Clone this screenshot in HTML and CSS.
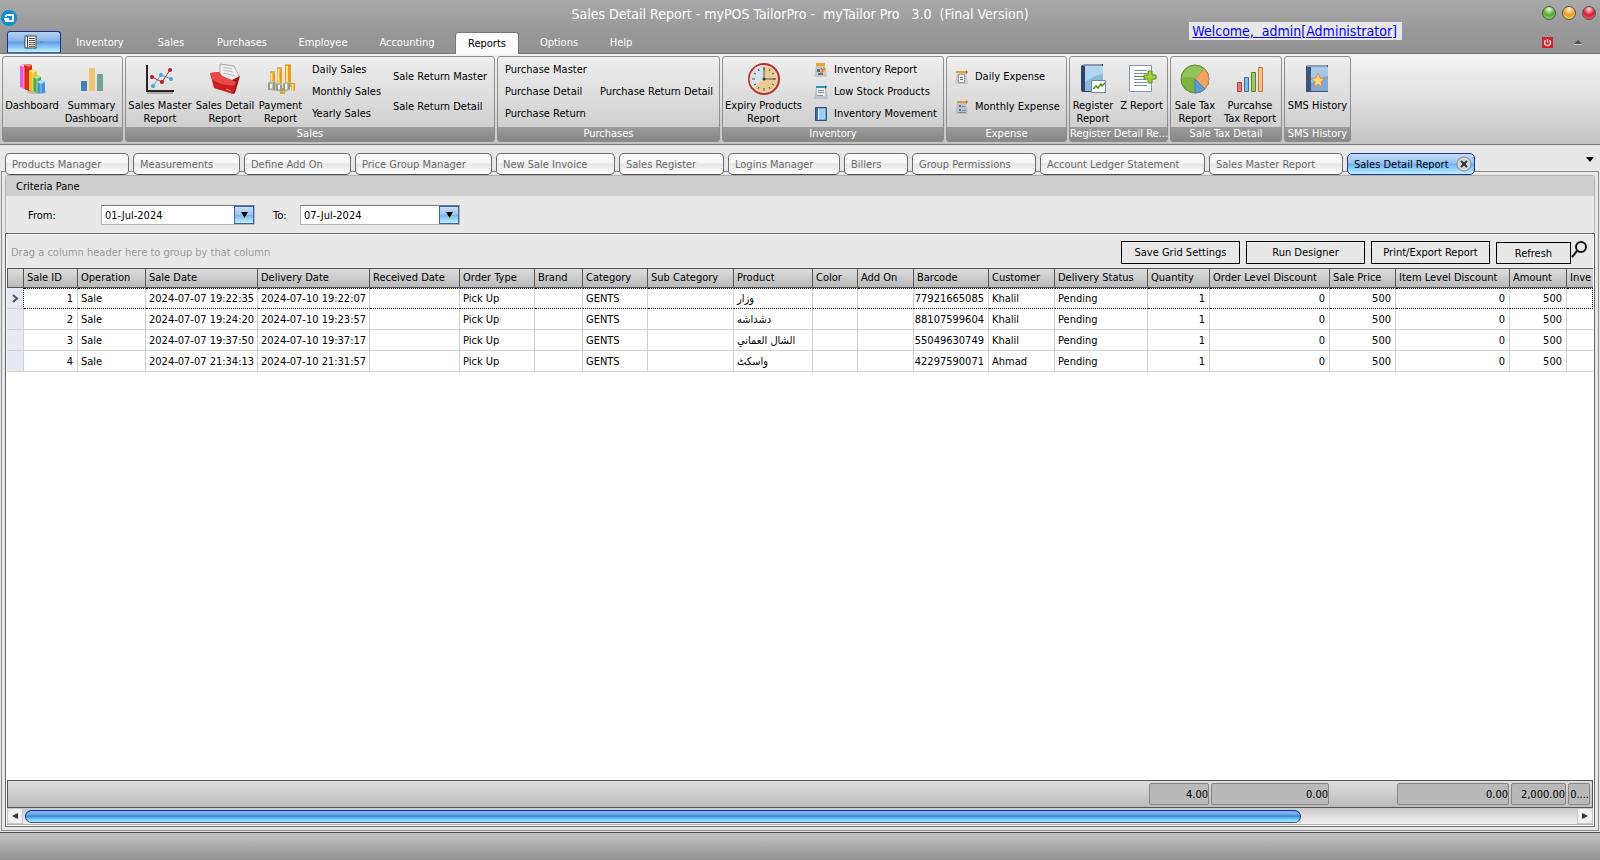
FILE: index.html
```html
<!DOCTYPE html>
<html lang="en">
<head>
    <meta charset="UTF-8">
    <meta name="viewport" content="width=device-width, initial-scale=1.0">
    <title>Sales Detail Report - myPOS TailorPro</title>
    <link rel="stylesheet" href="styles.css">
</head>
<body>
    <header class="titlebar">
        <svg class="logo" width="16" height="16" viewBox="0 0 16 16">
            <circle cx="8" cy="8" r="8" fill="#0a8fd8"/>
            <path d="M5 5h7v6H4M5 5v2M3 9h5" fill="none" stroke="#fff" stroke-width="2"/>
        </svg>
        <h1>Sales Detail Report - myPOS TailorPro -&nbsp; myTailor Pro&nbsp;&nbsp; 3.0&nbsp; (Final Version)</h1>
        <div class="window-buttons">
            <button type="button" class="ball green" aria-label="Minimize"></button>
            <button type="button" class="ball amber" aria-label="Restore"></button>
            <button type="button" class="ball red" aria-label="Close"></button>
        </div>
        <a class="welcome" href="#">Welcome,&nbsp; admin[Administrator]</a>
    </header>

    <nav class="menu">
        <button type="button" class="app-button" aria-label="Application menu">
            <svg width="22" height="14" viewBox="0 0 22 14">
                <rect x="2" y="1" width="11" height="12" fill="#fff" stroke="#444"/>
                <path d="M4.500 1v12" stroke="#444"/>
                <path d="M6 3.500h6M6 5.500h6M6 7.500h6M6 9.500h6M6 11.500h6" stroke="#555"/>
                <path d="M15 6h6l-3 3z" fill="#7a8ea8"/>
            </svg>
        </button>
        <a href="#">Inventory</a>
        <a href="#">Sales</a>
        <a href="#">Purchases</a>
        <a href="#">Employee</a>
        <a href="#">Accounting</a>
        <a href="#" class="current">Reports</a>
        <a href="#">Options</a>
        <a href="#">Help</a>
        <div class="menu-right">
            <button type="button" class="power" aria-label="Log off">
                <svg width="11" height="11" viewBox="0 0 11 11">
                    <path d="M3.600 3.300a3 3 0 1 0 3.800 0M5.500 2v3.500" fill="none" stroke="#fff" stroke-width="1.300"/>
                </svg>
            </button>
            <button type="button" class="collapse" aria-label="Collapse ribbon">
                <svg width="8" height="5" viewBox="0 0 8 5"><path d="M0 4l4-4 4 4z" fill="#555"/><path d="M0 4.500h8" stroke="#ccc"/></svg>
            </button>
        </div>
    </nav>

    <section class="ribbon">
        <div class="group g-dash">
            <div class="items">
                <button type="button" class="big">
                    <svg width="32" height="32" viewBox="0 0 32 32">
                        <ellipse cx="21" cy="29" rx="10" ry="2" fill="#bbb"/>
                        <path d="M4 3l3-2 4 1v23l-3 1-4-2z" fill="#e05be8"/><path d="M4 3l3-2 4 1-3 2z" fill="#f6b4fa"/>
                        <path d="M8 2l4-1 4 1v25l-3 1-5-2z" fill="#d92a18"/><path d="M8 2l4-1 4 1-3 2z" fill="#f58a76"/>
                        <path d="M13 8l4-2 4 2v20l-4 1-4-2z" fill="#f2c11b"/><path d="M13 8l4-2 4 2-4 2z" fill="#fbe88c"/>
                        <path d="M17 14l4-2 4 2v14l-4 2-4-2z" fill="#4fae38"/><path d="M17 14l4-2 4 2-4 2z" fill="#b5e59b"/>
                        <path d="M21 19l4-2 4 2v10l-4 2-4-2z" fill="#3f93d8"/><path d="M21 19l4-2 4 2-4 2z" fill="#b3dcf8"/>
                        <path d="M8 4v22M17 10v18M21 16v13M25 21v10" stroke="#fff" stroke-opacity=".5"/>
                    </svg>
                    <span>Dashboard</span>
                </button>
                <button type="button" class="big">
                    <svg width="32" height="32" viewBox="0 0 32 32">
                        <path d="M5 18h6v10H5z" fill="#4a80b8"/><path d="M13 5h6v23h-6z" fill="#efc473"/><path d="M21 11h6v17h-6z" fill="#74a493"/>
                    </svg>
                    <span>Summary<br>Dashboard</span>
                </button>
            </div>
        </div>
        <div class="group g-sales">
            <div class="items">
                <button type="button" class="big">
                    <svg width="32" height="32" viewBox="0 0 32 32">
                        <path d="M3 30h26" stroke="#aaa" stroke-width="2"/>
                        <path d="M3 2v26h27" fill="none" stroke="#2b2326" stroke-width="2"/>
                        <path d="M9 23l8-11 10 4" fill="none" stroke="#55aacb"/><path d="M8 14l10 5 8-12" fill="none" stroke="#b3303c"/>
                        <g fill="#45a5cf"><circle cx="9" cy="23" r="2"/><circle cx="17" cy="12" r="2"/><circle cx="27" cy="16" r="2"/></g>
                        <g fill="#b01826"><circle cx="8" cy="14" r="2"/><circle cx="18" cy="19" r="2"/><circle cx="26" cy="7" r="2"/></g>
                    </svg>
                    <span>Sales Master<br>Report</span>
                </button>
                <button type="button" class="big">
                    <svg width="32" height="32" viewBox="0 0 32 32">
                        <path d="M11 1l14 2 5 10-5 14-14-8z" fill="#efefef" stroke="#aaa"/>
                        <path d="M14 4l9 2M14 7l10 2M15 10l11 3" stroke="#bbb"/>
                        <path d="M31 13l-5 17-2 1-1-14z" fill="#a30f14"/>
                        <path d="M1 10l9-1 3 4 14 6-3 12-19-6z" fill="#cc1e22"/>
                        <path d="M1 10l9-1 3 4 14 6-1 3C16 23 8 20 3 16z" fill="#e84a48"/>
                        <path d="M17 26l5 2" stroke="#ef8a86"/>
                    </svg>
                    <span>Sales Detail<br>Report</span>
                </button>
                <button type="button" class="big">
                    <svg width="32" height="32" viewBox="0 0 32 32">
                        <path d="M5 10h5v12H5zM12 6h5v16h-5zM20 2h6v22h-6zM26 20h4v8h-4zM15 25h5v6h-5z" fill="#e99b1b"/>
                        <path d="M6.500 10v10M13.500 6v14M22 2v18M27.500 21v7" stroke="#ffe08a" stroke-width="2"/>
                        <path d="M5 9h5M12 5h5M20 2h6" stroke="#c87908"/>
                        <path d="M3 19l7-1v10l-7-1zM10 19l7 2v9l-7-3zM18 20l7-2v9l-7 3z" fill="#b9bda8"/>
                        <path d="M4 20v7M9 19v8M12 21v7M16 22v6M19 21v7M24 20v6" stroke="#747b67"/>
                        <path d="M6 21v4M14 22v4M21 21v5" stroke="#f3f5ea" stroke-width="2"/>
                    </svg>
                    <span>Payment<br>Report</span>
                </button>
                <div class="stack">
                    <button type="button">Daily Sales</button>
                    <button type="button">Monthly Sales</button>
                    <button type="button">Yearly Sales</button>
                </div>
                <div class="stack two">
                    <button type="button">Sale Return Master</button>
                    <button type="button">Sale Return Detail</button>
                </div>
            </div>
            <h2>Sales</h2>
        </div>
        <div class="group g-purchases">
            <div class="items">
                <div class="stack">
                    <button type="button">Purchase Master</button>
                    <button type="button">Purchase Detail</button>
                    <button type="button">Purchase Return</button>
                </div>
                <div class="stack one">
                    <button type="button">Purchase Return Detail</button>
                </div>
            </div>
            <h2>Purchases</h2>
        </div>
        <div class="group g-inventory">
            <div class="items">
                <button type="button" class="big">
                    <svg width="32" height="32" viewBox="0 0 32 32">
                        <circle cx="16" cy="16" r="15" fill="#eacb92" stroke="#bb2f2f" stroke-width="2"/>
                        <path d="M16 16V2A14 14 0 0 0 5 25z" fill="#d5e2ea"/>
                        <circle cx="16" cy="16" r="13" fill="none" stroke="#f3d9c8"/>
                        <path d="M16 4v3M16 25v3M4 16h3M25 16h3M22 6l-1 2M26 10l-2 1M26 22l-2-1M22 26l-1-2M10 26l1-2M6 22l2-1M6 10l2 1M10 6l1 2" stroke="#555"/>
                        <path d="M16 5v11h11" fill="none" stroke="#555"/><circle cx="16" cy="16" r="1.500" fill="#333"/>
                    </svg>
                    <span>Expiry Products<br>Report</span>
                </button>
                <div class="stack icons">
                    <button type="button">
                        <svg width="16" height="16" viewBox="0 0 16 16">
                            <path d="M3 3h9l2 12H1z" fill="#c6c8ce"/><path d="M3 1h9v3H3z" fill="#f0a42a"/>
                            <path d="M4 7h3v3H4zM5 11h5v2H5z" fill="#5f6b82"/><path d="M7 11l4-6 2 2-4 5z" fill="#e8932a"/><path d="M8 6l2 3" stroke="#d6452f"/>
                        </svg>Inventory Report</button>
                    <button type="button">
                        <svg width="16" height="16" viewBox="0 0 16 16">
                            <path d="M3 3h10l2 12H1z" fill="#bfc4c8"/><path d="M4 4h8v8H4z" fill="#e9edf0"/><path d="M3 2h10v2H3z" fill="#3591b3"/><path d="M12 1l2 2-2 2z" fill="#235f78"/>
                            <path d="M5 6.500h6M5 8.500h6M4 11.500h6" stroke="#8895a0"/>
                        </svg>Low Stock Products</button>
                    <button type="button">
                        <svg width="16" height="16" viewBox="0 0 16 16">
                            <path d="M2.500 1.500h11v13h-11z" fill="#6fb0e6" stroke="#2a5078"/><path d="M3 2h2v12H3z" fill="#3d6fa8"/><path d="M6.500 3.500h5v9h-5z" fill="#9dcbf1" stroke="#a9d3f4"/><path d="M5.500 2v12" stroke="#e5f2fc"/>
                        </svg>Inventory Movement</button>
                </div>
            </div>
            <h2>Inventory</h2>
        </div>
        <div class="group g-expense">
            <div class="items">
                <div class="stack two icons">
                    <button type="button">
                        <svg width="16" height="16" viewBox="0 0 16 16">
                            <path d="M3 3h9l2 12H1z" fill="#c8c8ca"/><path d="M2 2h11v2H2z" fill="#e9973a"/><path d="M12 1l2 2-2 2z" fill="#c56e18"/>
                            <path d="M4.500 5.500h6v8h-6z" fill="#f5f5f5" stroke="#9b9ea4"/><path d="M6 8.500h3M6 10.500h3" stroke="#686d78"/>
                        </svg>Daily Expense</button>
                    <button type="button">
                        <svg width="16" height="16" viewBox="0 0 16 16">
                            <path d="M3 3h9l2 12H1z" fill="#bcc1c7"/><path d="M3 2h10v2H3z" fill="#e9973a"/><path d="M12 1l2 2-2 2z" fill="#c56e18"/>
                            <path d="M5 6h2v2H5zM5 10h2v2H5z" fill="#3d7fb0"/><path d="M8 7.500h3M8 11.500h4M4 13.500h8" stroke="#7e8792"/>
                        </svg>Monthly Expense</button>
                </div>
            </div>
            <h2>Expense</h2>
        </div>
        <div class="group g-register">
            <div class="items">
                <button type="button" class="big">
                    <svg width="32" height="32" viewBox="0 0 32 32">
                        <path d="M4 3l3-2h19v28H5l-1-2z" fill="#2d4468"/><path d="M8 3h18v25H8z" fill="#8abbdc"/><path d="M8 3h18v8q-9 1-18 8z" fill="#b0d6ed"/><path d="M6 2h19" stroke="#e1e8f1"/>
                        <path d="M14.500 17.500h14v12h-14z" fill="#fff" stroke="#7085a8"/>
                        <path d="M16 26l3-3 2 2 3-4 1 2 3-3" fill="none" stroke="#4a9416" stroke-width="1.500"/>
                    </svg>
                    <span>Register<br>Report</span>
                </button>
                <button type="button" class="big">
                    <svg width="32" height="32" viewBox="0 0 32 32">
                        <path d="M3.500 2.500h22v26h-22z" fill="#fbfcff" stroke="#7f94bd"/>
                        <path d="M8 7.500h13M8 10.500h13M8 16.500h12M8 19.500h13M8 22.500h13" stroke="#8090b0"/><path d="M8 13.500h12" stroke="#449418"/>
                        <path d="M22 8h4v4h4v4h-4v4h-4v-4h-4v-4h4z" fill="#a6cf38" stroke="#4f901c"/>
                    </svg>
                    <span>Z Report</span>
                </button>
            </div>
            <h2>Register Detail Re...</h2>
        </div>
        <div class="group g-tax">
            <div class="items">
                <button type="button" class="big">
                    <svg width="32" height="32" viewBox="0 0 32 32">
                        <circle cx="16" cy="16" r="14" fill="#7cb342" stroke="#5a8730"/>
                        <path d="M16 16L25 6a14 14 0 0 1 1 20z" fill="#f2a361" stroke="#d58a50"/><path d="M16 16l10 10a14 14 0 0 1-10 4z" fill="#5d9ed6" stroke="#467fb2"/>
                        <path d="M3 15A13 13 0 0 1 24 6l-8 9q-7-2-13 0z" fill="#a3ce6c" fill-opacity=".6"/>
                    </svg>
                    <span>Sale Tax<br>Report</span>
                </button>
                <button type="button" class="big">
                    <svg width="32" height="32" viewBox="0 0 32 32">
                        <path d="M3.500 19.500h4v9h-4z" fill="#e58080" stroke="#b53838"/><path d="M10.500 14.500h4v14h-4z" fill="#85b8e6" stroke="#3870a8"/>
                        <path d="M17.500 9.500h4v19h-4z" fill="#9cc95a" stroke="#568720"/><path d="M24.500 4.500h4v24h-4z" fill="#f7c088" stroke="#c27a38"/>
                    </svg>
                    <span>Purcahse<br>Tax Report</span>
                </button>
            </div>
            <h2>Sale Tax Detail</h2>
        </div>
        <div class="group g-sms">
            <div class="items">
                <button type="button" class="big">
                    <svg width="32" height="32" viewBox="0 0 32 32">
                        <path d="M4 3l2-1h20v27H4z" fill="#3d5579"/><path d="M9 4h17v24H9z" fill="#7fa9d5"/><path d="M9 4h17v9q-9 1-17 7z" fill="#a9c7e6"/><path d="M5 3h20" stroke="#e0e7f0"/>
                        <path d="M16 10l2 5 5 .500-4 3.500 1 5-4-3-4 3 1-5-4-3.500 5-.500z" fill="#fcd28a" stroke="#dd8f3d"/>
                    </svg>
                    <span>SMS History</span>
                </button>
            </div>
            <h2>SMS History</h2>
        </div>
    </section>

    <main class="workspace">
        <div class="tabs">
            <button type="button">Products Manager</button>
            <button type="button">Measurements</button>
            <button type="button">Define Add On</button>
            <button type="button">Price Group Manager</button>
            <button type="button">New Sale Invoice</button>
            <button type="button">Sales Register</button>
            <button type="button">Logins Manager</button>
            <button type="button">Billers</button>
            <button type="button">Group Permissions</button>
            <button type="button">Account Ledger Statement</button>
            <button type="button">Sales Master Report</button>
            <button type="button" class="active">Sales Detail Report
                <svg width="16" height="16" viewBox="0 0 16 16"><circle cx="8" cy="8" r="7" fill="#d6d6d6" stroke="#8c8c8c"/><path d="M5 5l6 6M11 5l-6 6" stroke="#333" stroke-width="2"/></svg>
            </button>
            <svg class="more" width="8" height="5" viewBox="0 0 8 5"><path d="M0 0h8L4 5z" fill="#000"/></svg>
        </div>

        <div class="page">
            <form class="criteria">
                <h3>Criteria Pane</h3>
                <div class="fields">
                    <label class="from" for="fromDate">From:</label>
                    <div class="date">
                        <input type="text" id="fromDate" value="01-Jul-2024">
                        <button type="button" aria-label="Open calendar"><svg width="7" height="6" viewBox="0 0 7 6"><path d="M0 0h7L3.500 6z"/></svg></button>
                    </div>
                    <label class="to" for="toDate">To:</label>
                    <div class="date wide">
                        <input type="text" id="toDate" value="07-Jul-2024">
                        <button type="button" aria-label="Open calendar"><svg width="7" height="6" viewBox="0 0 7 6"><path d="M0 0h7L3.500 6z"/></svg></button>
                    </div>
                </div>
            </form>

            <div class="grid">
                <div class="group-panel">
                    <p>Drag a column header here to group by that column</p>
                    <button type="button">Save Grid Settings</button>
                    <button type="button">Run Designer</button>
                    <button type="button">Print/Export Report</button>
                    <button type="button" class="refresh">Refresh</button>
                    <svg class="search" width="16" height="17" viewBox="0 0 16 17"><circle cx="10" cy="6" r="5" fill="none" stroke="#111" stroke-width="2"/><path d="M6 10l-5 6" stroke="#111" stroke-width="2"/></svg>
                </div>

                <table class="data">
                    <colgroup>
                        <col class="c-mark"><col class="c-id"><col class="c-op"><col class="c-date"><col class="c-date"><col class="c-recv"><col class="c-type"><col class="c-brand"><col class="c-cat"><col class="c-sub"><col class="c-prod"><col class="c-color"><col class="c-addon"><col class="c-bar"><col class="c-cust"><col class="c-status"><col class="c-qty"><col class="c-old"><col class="c-price"><col class="c-ild"><col class="c-amt"><col>
                    </colgroup>
                    <thead>
                        <tr>
                            <th></th><th>Sale ID</th><th>Operation</th><th>Sale Date</th><th>Delivery Date</th><th>Received Date</th><th>Order Type</th><th>Brand</th><th>Category</th><th>Sub Category</th><th>Product</th><th>Color</th><th>Add On</th><th>Barcode</th><th>Customer</th><th>Delivery Status</th><th>Quantity</th><th>Order Level Discount</th><th>Sale Price</th><th>Item Level Discount</th><th>Amount</th><th>Inve</th>
                        </tr>
                    </thead>
                    <tbody>
                        <tr class="focused">
                            <td class="mark"><svg width="7" height="9" viewBox="0 0 7 9"><path d="M1 1l4 3.500L1 8" fill="none" stroke="#555" stroke-width="2"/></svg></td>
                            <td class="num">1</td><td>Sale</td><td>2024-07-07 19:22:35</td><td>2024-07-10 19:22:07</td><td></td><td>Pick Up</td><td></td><td>GENTS</td><td></td><td>وزار</td><td></td><td></td><td class="num">77921665085</td><td>Khalil</td><td>Pending</td><td class="num">1</td><td class="num">0</td><td class="num">500</td><td class="num">0</td><td class="num">500</td><td></td>
                        </tr>
                        <tr>
                            <td class="mark"></td>
                            <td class="num">2</td><td>Sale</td><td>2024-07-07 19:24:20</td><td>2024-07-10 19:23:57</td><td></td><td>Pick Up</td><td></td><td>GENTS</td><td></td><td>دشداشه</td><td></td><td></td><td class="num">88107599604</td><td>Khalil</td><td>Pending</td><td class="num">1</td><td class="num">0</td><td class="num">500</td><td class="num">0</td><td class="num">500</td><td></td>
                        </tr>
                        <tr>
                            <td class="mark"></td>
                            <td class="num">3</td><td>Sale</td><td>2024-07-07 19:37:50</td><td>2024-07-10 19:37:17</td><td></td><td>Pick Up</td><td></td><td>GENTS</td><td></td><td>الشال العماني</td><td></td><td></td><td class="num">55049630749</td><td>Khalil</td><td>Pending</td><td class="num">1</td><td class="num">0</td><td class="num">500</td><td class="num">0</td><td class="num">500</td><td></td>
                        </tr>
                        <tr>
                            <td class="mark"></td>
                            <td class="num">4</td><td>Sale</td><td>2024-07-07 21:34:13</td><td>2024-07-10 21:31:57</td><td></td><td>Pick Up</td><td></td><td>GENTS</td><td></td><td>واسکٹ</td><td></td><td></td><td class="num">42297590071</td><td>Ahmad</td><td>Pending</td><td class="num">1</td><td class="num">0</td><td class="num">500</td><td class="num">0</td><td class="num">500</td><td></td>
                        </tr>
                    </tbody>
                </table>

                <table class="totals">
                    <colgroup>
                        <col class="c-mark"><col class="c-id"><col class="c-op"><col class="c-date"><col class="c-date"><col class="c-recv"><col class="c-type"><col class="c-brand"><col class="c-cat"><col class="c-sub"><col class="c-prod"><col class="c-color"><col class="c-addon"><col class="c-bar"><col class="c-cust"><col class="c-status"><col class="c-qty"><col class="c-old"><col class="c-price"><col class="c-ild"><col class="c-amt"><col>
                    </colgroup>
                    <tbody>
                        <tr>
                            <td colspan="16"></td>
                            <td><div class="sum">4.00</div></td>
                            <td><div class="sum">0.00</div></td>
                            <td></td>
                            <td><div class="sum">0.00</div></td>
                            <td><div class="sum">2,000.00</div></td>
                            <td><div class="sum last">0....</div></td>
                        </tr>
                    </tbody>
                </table>

                <div class="scrollbar">
                    <button type="button" aria-label="Scroll left"><svg width="6" height="8" viewBox="0 0 6 8"><path d="M6 1v6L0 4z" fill="#333"/></svg></button>
                    <div class="track"><div class="thumb"></div></div>
                    <button type="button" aria-label="Scroll right"><svg width="6" height="8" viewBox="0 0 6 8"><path d="M0 1v6l6-3z" fill="#333"/></svg></button>
                </div>
            </div>
        </div>
    </main>

    <footer class="statusbar"></footer>
</body>
</html>
```
FILE: styles.css
```css
* {
    box-sizing: border-box;
}

body {
    margin: 0;
    min-height: 100vh;
    display: flex;
    flex-direction: column;
    font-family: "DejaVu Sans Condensed", "DejaVu Sans", sans-serif;
    font-size: 11px;
    line-height: 13px;
    color: #000;
    background-color: #e8e8e8;
}

button,
input {
    font: inherit;
    color: inherit;
    margin: 0;
    padding: 0;
    border: none;
    background: none;
}

h1, h2, h3, p {
    margin: 0;
    font-weight: normal;
}

svg {
    display: block;
    flex: none;
}

a {
    color: inherit;
    text-decoration: none;
}

/* title bar */
.titlebar {
    position: relative;
    display: flex;
    align-items: center;
    height: 31px;
    background: linear-gradient(#a9a9a9, #989898);
}

.logo {
    position: absolute;
    left: 1px;
    top: 10px;
}

h1 {
    flex: 1;
    padding-bottom: 3px;
    text-align: center;
    font-size: 14px;
    line-height: 20px;
    color: #fff;
}

.window-buttons {
    position: absolute;
    right: 4px;
    top: 6px;
    display: flex;
    gap: 6px;
}

.ball {
    width: 14px;
    height: 14px;
    border-radius: 50%;
    border: 1px solid #555;
}

.green { background: radial-gradient(circle at 50% 20%, #eaffd9, #56ac34 50%, #8ee060); }
.amber { background: radial-gradient(circle at 50% 20%, #fff4d0, #e89c22 50%, #ffe064); }
.red { background: radial-gradient(circle at 50% 20%, #ffd9dc, #cc2239 50%, #ff7080); }

.welcome {
    position: absolute;
    right: 198px;
    top: 22px;
    z-index: 1;
    padding: 0 5px 0 3px;
    font-size: 14px;
    line-height: 18px;
    color: #0000ff;
    text-decoration: underline;
    background-color: #e8e8e8;
}

/* menu strip */
.menu {
    display: grid;
    grid-template-columns: 54px 78px 64px 78px 84px 84px 76px 68px 56px 1fr;
    height: 23px;
    padding-left: 7px;
    border-bottom: 1px solid #777;
    background: linear-gradient(#989898, #929292);
    color: #fff;
}

.menu a {
    padding-top: 5px;
    text-align: center;
}

.menu .current {
    margin: 1px 6px -1px;
    padding-top: 4px;
    border-radius: 3px 3px 0 0;
    border: 1px solid #777;
    border-bottom: none;
    color: #000;
    background-color: #fbfbfb;
}

.app-button {
    display: flex;
    align-items: center;
    justify-content: center;
    border: 1px solid #1c2d8c;
    border-bottom-color: #2468c0;
    border-radius: 3px 3px 0 0;
    background: linear-gradient(#b4d2f4, #86b4ea 45%, #5a9be6 50%, #c0f2ff);
}

.menu-right {
    display: flex;
    align-items: center;
    justify-content: flex-end;
    gap: 21px;
    padding-right: 18px;
}

.power {
    background-color: #d81e26;
}

/* ribbon */
.ribbon {
    display: flex;
    gap: 2px;
    height: 91px;
    padding: 2px;
    border-bottom: 1px solid #777;
    background: linear-gradient(#f4f4f4, #e0e0e0 50%, #c2c2c2);
}

.group {
    display: flex;
    flex-direction: column;
    height: 86px;
    border: 1px solid #8f8f8f;
    border-radius: 3px;
    background: linear-gradient(#efefef, #cfcfcf 70px, #9c9c9c 70px, #878787);
}

.g-dash { width: 121px; }
.g-sales { width: 370px; }
.g-purchases { width: 223px; }
.g-inventory { width: 222px; }
.g-expense { width: 121px; }
.g-register { width: 99px; }
.g-tax { width: 112px; }
.g-sms { width: 67px; }

.items {
    display: grid;
    height: 70px;
}

.g-dash .items { grid-template-columns: 58px 61px; }
.g-sales .items { grid-template-columns: 68px 62px 49px 81px 1fr; }
.g-purchases .items { grid-template-columns: 95px 1fr; }
.g-inventory .items { grid-template-columns: 81px 1fr; }
.g-register .items { grid-template-columns: 46px 51px; }
.g-tax .items { grid-template-columns: 48px 62px; }

.items button {
    white-space: nowrap;
}

.big {
    display: flex;
    flex-direction: column;
    align-items: center;
    gap: 4px;
    padding-top: 6px;
}

.stack {
    display: grid;
    grid-template-rows: repeat(3, 22px);
    align-content: center;
    padding-left: 7px;
}

.stack.two {
    grid-template-rows: repeat(2, 30px);
}

.stack.one {
    grid-template-rows: 22px;
}

.stack button {
    display: flex;
    align-items: center;
    gap: 5px;
}

.stack.icons {
    padding-left: 9px;
}

.g-expense .stack.icons {
    padding-left: 7px;
}

.group h2 {
    font-size: 11px;
    line-height: 15px;
    text-align: center;
    color: #fff;
    white-space: nowrap;
}

/* document tabs */
.workspace {
    flex: 1;
    display: flex;
    flex-direction: column;
    padding: 8px 1px 1px;
}

.tabs {
    display: grid;
    grid-template-columns: 124px 107px 107px 137px 119px 105px 112px 64px 124px 165px 134px 128px 1fr;
    column-gap: 4px;
    padding: 0 5px 0 4px;
    position: relative;
    z-index: 1;
    margin-bottom: -4px;
}

.tabs button {
    height: 22px;
    padding-left: 6px;
    text-align: left;
    white-space: nowrap;
    color: #6a6a6a;
    border: 1px solid #6e6e6e;
    border-bottom-color: #4c4c4c;
    border-radius: 5px;
    background: linear-gradient(#fff, #f4f4f4 45%, #e6e6e6 50%, #fff);
}

.tabs .active {
    display: flex;
    align-items: center;
    justify-content: space-between;
    padding-right: 2px;
    color: #000;
    border-color: #1b3796;
    background: linear-gradient(#c3dcf8, #97c3f3 45%, #6bb0f5 50%, #bff0ff);
}

.more {
    justify-self: end;
    margin-top: 4px;
}

.page {
    flex: 1;
    display: flex;
    flex-direction: column;
    padding: 3px;
    border: 1px solid #8c8c8c;
}

/* criteria */
.criteria {
    height: 58px;
    border: 1px solid #b0b0b0;
    border-bottom: none;
    border-radius: 3px;
}

.criteria h3 {
    padding: 4px 10px 3px;
    font-size: 11px;
    background-color: #cfcfcf;
}

.fields {
    display: flex;
    align-items: center;
    padding: 9px 0 0 22px;
}

.from {
    width: 73px;
}

.to {
    width: 45px;
    padding-left: 18px;
}

.date {
    display: flex;
    width: 154px;
    height: 20px;
    border: 1px solid #b5b5b5;
    border-top-color: #777;
    background-color: #fff;
}

.date.wide {
    width: 160px;
}

.date input {
    flex: 1;
    min-width: 0;
    padding-left: 3px;
}

.date button {
    display: flex;
    align-items: center;
    justify-content: center;
    width: 20px;
    border: 1px solid #3a64a8;
    background: linear-gradient(#c6dcf6, #9cc3ee 50%, #78b2ee 50%, #bff0ff);
}

/* grid */
.grid {
    flex: 1;
    display: flex;
    flex-direction: column;
    padding: 1px;
    border: 1px solid #666;
    background-color: #fff;
}

.group-panel {
    display: flex;
    align-items: flex-end;
    gap: 6px;
    height: 33px;
    padding: 0 6px 4px 4px;
    background-color: #e8e8e8;
}

.group-panel p {
    flex: 1;
    padding-bottom: 5px;
    color: #999;
}

.group-panel button {
    width: 119px;
    height: 23px;
    border: 1px solid #000;
}

.group-panel .refresh {
    width: 75px;
    height: 22px;
}

.search {
    align-self: flex-start;
    margin: 6px 0 0 -6px;
}

table {
    width: 100%;
    table-layout: fixed;
    border-collapse: separate;
    border-spacing: 0;
}

.c-mark { width: 17px; }
.c-id { width: 54px; }
.c-op { width: 68px; }
.c-date { width: 112px; }
.c-recv { width: 90px; }
.c-type { width: 75px; }
.c-brand { width: 48px; }
.c-cat { width: 65px; }
.c-sub { width: 86px; }
.c-prod { width: 79px; }
.c-color { width: 45px; }
.c-addon { width: 56px; }
.c-bar { width: 75px; }
.c-cust { width: 66px; }
.c-status { width: 93px; }
.c-qty { width: 62px; }
.c-old { width: 120px; }
.c-price { width: 66px; }
.c-ild { width: 114px; }
.c-amt { width: 57px; }

.data th,
.data td {
    padding: 0 3px;
    text-align: left;
    font-weight: normal;
    white-space: nowrap;
    overflow: hidden;
}

.data th {
    height: 20px;
    padding-bottom: 2px;
    border: solid #555;
    border-width: 1px 1px 1px 0;
    background: linear-gradient(#dedede, #b9b9b9);
}

.data th:first-child {
    border-left-width: 1px;
}

.data td {
    height: 21px;
    border-right: 1px solid #d0d0d0;
    border-bottom: 1px solid #d0d0d0;
}

.data .num {
    padding-left: 0;
    padding-right: 4px;
    text-align: right;
}

.data .mark {
    padding-left: 5px;
    background-color: #e3e9f5;
}

.data .focused td:not(.mark) {
    border-top: 1px dotted #000;
    border-bottom: 1px dotted #000;
}

.data .focused td:last-child {
    border-right: 1px dotted #000;
}

.data .focused .mark {
    border-right: 1px dotted #000;
}

.data th:last-child,
.data tr:not(.focused) td:last-child {
    border-right: none;
}

.totals {
    margin-top: auto;
    height: 28px;
    border: 1px solid #555;
    background: linear-gradient(#dedede, #bcbcbc);
}

.totals td {
    padding: 0 2px 0 0;
}

.sum {
    height: 22px;
    padding: 4px 0 0;
    text-align: right;
    border: 1px solid #858585;
    border-radius: 2px;
    background-color: #b9b9b9;
}

.sum.last {
    width: 22px;
}

.scrollbar {
    display: flex;
    height: 17px;
    background: linear-gradient(#c8c8c8, #f0f0f0);
    border-bottom: 1px solid #b0b0b0;
}

.scrollbar button {
    display: flex;
    align-items: center;
    justify-content: center;
    width: 16px;
    border: 1px solid #c4c4c4;
    background-color: #f0f0f0;
}

.track {
    flex: 1;
    display: grid;
    grid-template-columns: 14fr 3fr;
    padding: 2px;
}

.thumb {
    height: 13px;
    border: 1px solid #0a35a0;
    border-bottom-color: #4c5560;
    border-radius: 7px;
    background: linear-gradient(#86b6ea, #6aa6e6 35%, #2f7ed8 45%, #68bcf8 65%, #a8eaff);
}

.statusbar {
    height: 28px;
    border-top: 1px solid #4a4a4a;
    background: linear-gradient(#c4c4c4, #929292);
}
```
